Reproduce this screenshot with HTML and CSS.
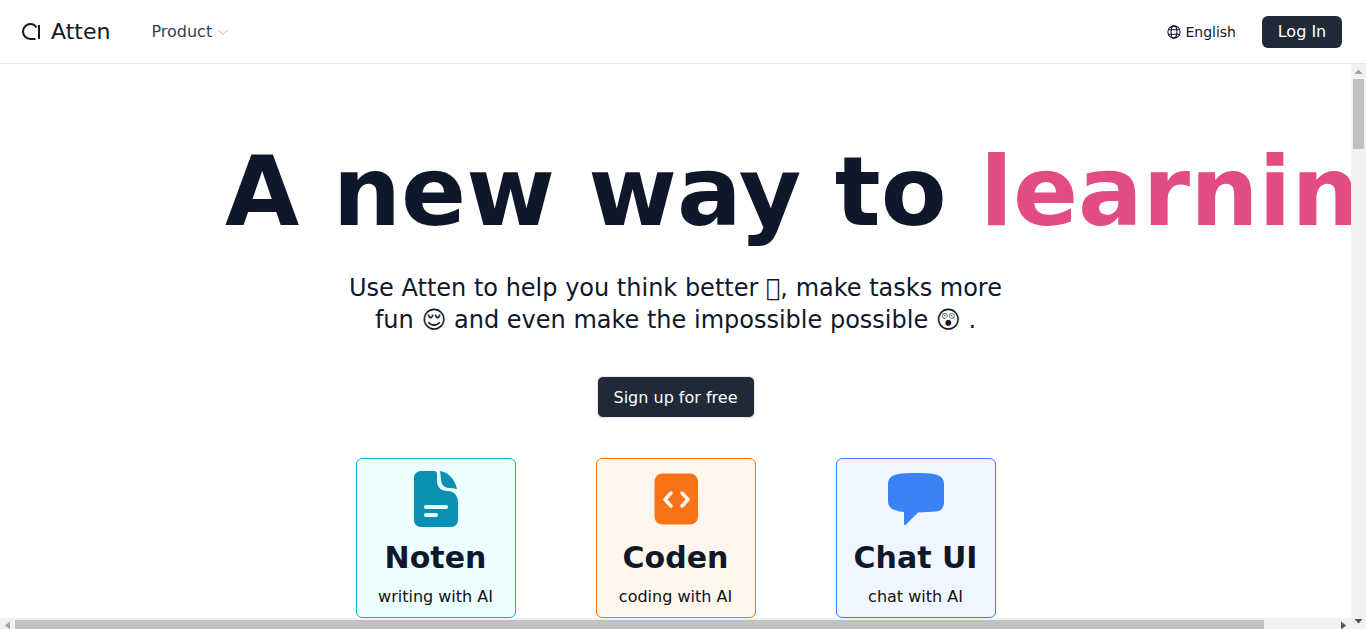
FILE: index.html
```html
<!DOCTYPE html>
<html lang="en">
<head>
    <meta charset="UTF-8">
    <meta name="viewport" content="width=device-width, initial-scale=1.0">
    <title>Atten</title>
    <link rel="stylesheet" href="styles.css">
</head>
<body>
    <header class="navbar">
        <div class="nav-left">
            <a class="logo" href="#">
                <svg class="logo-icon" xmlns="http://www.w3.org/2000/svg" viewBox="0 0 20 20" width="20" height="20">
                    <path d="M13.500 17H8.500A7.500 7.500 0 0 1 8.500 2C11 2 13 3 14.500 5.500" fill="none" stroke="currentColor" stroke-width="2"/>
                    <path d="M17 3V17" fill="none" stroke="currentColor" stroke-width="2"/>
                </svg>
                <span>Atten</span>
            </a>
            <button class="product-link">
                Product
                <svg xmlns="http://www.w3.org/2000/svg" viewBox="0 0 24 24" width="12" height="12">
                    <path d="M3 8l9 9 9-9" fill="none" stroke="currentColor" stroke-width="1.500"/>
                </svg>
            </button>
        </div>
        <div class="nav-right">
            <button class="lang-button">
                <svg xmlns="http://www.w3.org/2000/svg" viewBox="0 0 24 24" width="14" height="14">
                    <g fill="none" stroke="currentColor" stroke-width="1.800">
                        <circle cx="12" cy="12" r="10.500"/>
                        <ellipse cx="12" cy="12" rx="5" ry="10.500"/>
                        <path d="M2.500 8h19M2.500 16h19"/>
                    </g>
                </svg>
                English
            </button>
            <button class="login-button">Log In</button>
        </div>
    </header>
    <div class="page">
        <div class="page-content">
            <main class="hero">
                <h1 class="hero-title">A new way to <span class="accent">learning</span></h1>
                <p class="hero-text">Use Atten to help you think better &#xE000;, make tasks more<br>fun 😌 and even make the impossible possible 😲 .</p>
                <button class="signup-button">Sign up for free</button>
                <div class="cards">
                    <a class="card card-noten" href="#">
                        <svg class="card-icon" xmlns="http://www.w3.org/2000/svg" viewBox="0 0 56 56" width="56" height="56">
                            <path d="M13 0H26C28 0 29 1 29 3V10C29 16 33 20 39 20H40C46 20 50 25 50 31V49C50 53 47 56 43 56H13C9 56 6 53 6 49V7C6 3 9 0 13 0Z" fill="#0891b2"/>
                            <path d="M32 0C40 1 47 8 49 18C45 17 43 17 41 17C36 17 33 13 33 8Z" fill="#0891b2"/>
                            <rect x="16" y="34" width="24" height="4" rx="2" fill="#ecfeff"/>
                            <rect x="16" y="42" width="14" height="4" rx="2" fill="#ecfeff"/>
                        </svg>
                        <span class="card-title">Noten</span>
                        <span class="card-text">writing with AI</span>
                    </a>
                    <a class="card card-coden" href="#">
                        <svg class="card-icon" xmlns="http://www.w3.org/2000/svg" viewBox="0 0 56 56" width="56" height="56">
                            <rect x="6.500" y="2.500" width="43.500" height="51" rx="8" fill="#f97316"/>
                            <path d="M23 22l-6 6.500 6 6.500M34 22l6 6.500-6 6.500" fill="none" stroke="#fff7ed" stroke-width="3.500" stroke-linecap="round" stroke-linejoin="round"/>
                        </svg>
                        <span class="card-title">Coden</span>
                        <span class="card-text">coding with AI</span>
                    </a>
                    <a class="card card-chat" href="#">
                        <svg class="card-icon" xmlns="http://www.w3.org/2000/svg" viewBox="0 0 56 56" width="56" height="56">
                            <path d="M28 2C36 2 43 2 48 3.500C53 5 56 8 56 13V31C56 37 53 40 48 40.500C42 41 36 41 30 41.500L18 53.500C17 54.500 16 54 16 52.500V41C13 41 10 40 7 39C3 38 0 35 0 30V13C0 8 3 5 8 3.500C13 2 20 2 28 2Z" fill="#3b82f6"/>
                        </svg>
                        <span class="card-title">Chat UI</span>
                        <span class="card-text">chat with AI</span>
                    </a>
                </div>
            </main>
            <div class="scrollbar scrollbar-x">
                <svg class="scroll-arrow" xmlns="http://www.w3.org/2000/svg" viewBox="0 0 15 15" width="15" height="15"><path d="M10 3.500v8L5 7.500z" fill="#a3a3a3"/></svg>
                <div class="scroll-thumb-x"></div>
                <svg class="scroll-arrow arrow-end" xmlns="http://www.w3.org/2000/svg" viewBox="0 0 15 15" width="15" height="15"><path d="M5 3.500v8l5-4z" fill="#505050"/></svg>
            </div>
        </div>
        <div class="scrollbar scrollbar-y">
            <svg class="scroll-arrow" xmlns="http://www.w3.org/2000/svg" viewBox="0 0 15 15" width="15" height="15"><path d="M3.500 10h8L7.500 5.500z" fill="#a3a3a3"/></svg>
            <div class="scroll-thumb-y"></div>
            <svg class="scroll-arrow arrow-end" xmlns="http://www.w3.org/2000/svg" viewBox="0 0 15 15" width="15" height="15"><path d="M3.500 5h8L7.500 9.500z" fill="#505050"/></svg>
        </div>
    </div>
</body>
</html>
```
FILE: styles.css
```css
* {
    box-sizing: border-box;
}

body {
    font-family: "DejaVu Sans", sans-serif;
    margin: 0;
    height: 100vh;
    overflow: hidden;
    background: white;
    color: #0f172a;
}

button {
    font-family: inherit;
    cursor: pointer;
    border: none;
    background: none;
    padding: 0;
}

a {
    color: inherit;
    text-decoration: none;
}

.navbar {
    height: 64px;
    display: flex;
    justify-content: space-between;
    align-items: center;
    padding: 0 24px 0 22px;
    border-bottom: 1px solid #e5e7eb;
}

.nav-left {
    display: flex;
    align-items: center;
    gap: 41px;
}

.logo {
    display: flex;
    align-items: center;
    gap: 9px;
    font-size: 22px;
    color: #111827;
}

.logo-icon {
    display: block;
}

.product-link {
    display: flex;
    align-items: center;
    gap: 5px;
    font-size: 16px;
    color: #334155;
}

.product-link svg {
    color: #9ca3af;
}

.nav-right {
    display: flex;
    align-items: center;
    gap: 26px;
}

.lang-button {
    display: flex;
    align-items: center;
    gap: 4px;
    font-size: 14px;
    color: #111827;
}

.login-button {
    width: 80px;
    height: 32px;
    background-color: #1f2937;
    color: white;
    border-radius: 6px;
    font-size: 16px;
}

.page {
    height: calc(100vh - 64px);
    display: flex;
    overflow: hidden;
}

.page-content {
    flex: 1;
    min-width: 0;
    display: flex;
    flex-direction: column;
}

.hero {
    height: 554px;
    flex: none;
    overflow: hidden;
    display: flex;
    flex-direction: column;
    align-items: center;
}

.hero-title {
    align-self: flex-start;
    margin: 80px 0 0 225px;
    font-size: 96px;
    line-height: 96px;
    font-weight: 700;
    white-space: nowrap;
}

.accent {
    color: #e34c82;
}

.hero-text {
    margin: 32px 0 0;
    font-size: 24px;
    line-height: 32px;
    text-align: center;
    color: #0f172a;
}

.signup-button {
    flex: none;
    margin-top: 40px;
    width: 158px;
    height: 42px;
    background-color: #1f2937;
    color: white;
    border: 1px solid #e5e7eb;
    border-radius: 6px;
    font-size: 16px;
}

.cards {
    display: flex;
    flex: none;
    gap: 80px;
    margin-top: 40px;
}

.card {
    width: 160px;
    height: 160px;
    display: flex;
    flex-direction: column;
    align-items: center;
    padding-top: 12px;
    border: 1px solid;
    border-radius: 6px;
}

.card-icon {
    display: block;
    flex: none;
}

.card-noten {
    background: #ecfeff;
    border-color: #06b6d4;
}

.card-coden {
    background: #fff7ed;
    border-color: #f97316;
}

.card-chat {
    background: #eff6ff;
    border-color: #3b82f6;
}

.card-title {
    margin-top: 13px;
    font-size: 30px;
    line-height: 36px;
    font-weight: 700;
}

.card-text {
    margin-top: 9px;
    font-size: 16px;
    line-height: 24px;
    color: #111;
}

/* scrollbars */
.scrollbar {
    flex: none;
    display: flex;
    background: #f1f1f1;
}

.scroll-arrow {
    display: block;
    flex: none;
}

.arrow-end {
    margin-left: auto;
}

.scrollbar-x {
    height: 15px;
}

.scroll-thumb-x {
    width: 1249px;
    height: 11px;
    margin-top: 2px;
    background: #c1c1c1;
}

.scrollbar-y {
    width: 15px;
    flex-direction: column;
}

.scrollbar-y .arrow-end {
    margin-left: 0;
    margin-top: auto;
}

.scroll-thumb-y {
    width: 11px;
    height: 70px;
    margin-left: 2px;
    background: #c1c1c1;
}
```
